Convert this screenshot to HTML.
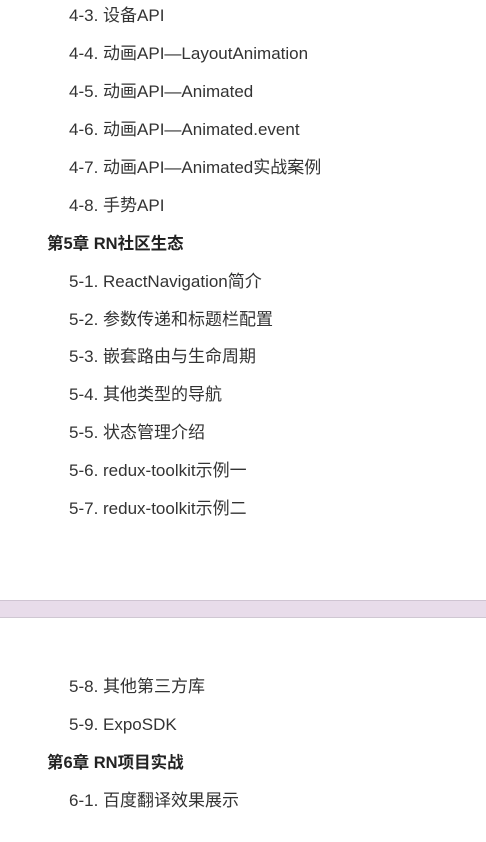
<!DOCTYPE html>
<html><head><meta charset="utf-8"><style>
body{margin:0;width:486px;height:842px;background:#fff;position:relative;overflow:hidden;font-family:"Liberation Sans","Noto Sans CJK SC",sans-serif;color:#333;}
.i{position:absolute;left:69px;font-size:17px;line-height:20px;white-space:nowrap;}
.c{position:absolute;left:47px;font-size:16.5px;line-height:20px;font-weight:bold;color:#222;white-space:nowrap;}
.band{position:absolute;left:0;top:600px;width:486px;height:18px;background:#e8dcea;border-top:1px solid #cfc4d2;border-bottom:1px solid #cfc7d2;box-sizing:border-box;}
</style></head><body>
<div class="i" style="top:6px">4-3. 设备API</div>
<div class="i" style="top:44px">4-4. 动画API—LayoutAnimation</div>
<div class="i" style="top:82px">4-5. 动画API—Animated</div>
<div class="i" style="top:120px">4-6. 动画API—Animated.event</div>
<div class="i" style="top:158px">4-7. 动画API—Animated实战案例</div>
<div class="i" style="top:196px">4-8. 手势API</div>
<div class="c" style="top:234px">第5章 RN社区生态</div>
<div class="i" style="top:272px">5-1. ReactNavigation简介</div>
<div class="i" style="top:310px">5-2. 参数传递和标题栏配置</div>
<div class="i" style="top:347px">5-3. 嵌套路由与生命周期</div>
<div class="i" style="top:385px">5-4. 其他类型的导航</div>
<div class="i" style="top:423px">5-5. 状态管理介绍</div>
<div class="i" style="top:461px">5-6. redux-toolkit示例一</div>
<div class="i" style="top:499px">5-7. redux-toolkit示例二</div>
<div class="band"></div>
<div class="i" style="top:677px">5-8. 其他第三方库</div>
<div class="i" style="top:715px">5-9. ExpoSDK</div>
<div class="c" style="top:753px">第6章 RN项目实战</div>
<div class="i" style="top:791px">6-1. 百度翻译效果展示</div>
</body></html>
